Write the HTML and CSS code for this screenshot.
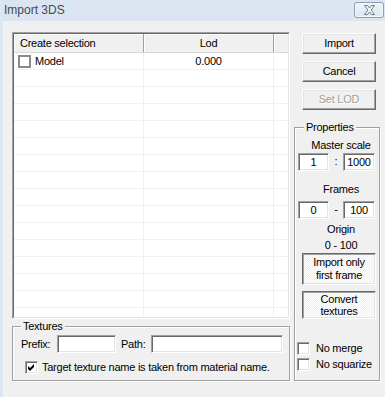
FILE: index.html
```html
<!DOCTYPE html>
<html>
<head>
<meta charset="utf-8">
<title>Import 3DS</title>
<link rel="stylesheet" href="styles.css">
</head>
<body>
<div class="window">
  <div class="titlebar">
    <span class="title">Import 3DS</span>
    <button class="close" aria-label="Close">
      <svg width="13" height="10" viewBox="0 0 13 10"><path d="M1.5 0.5 H4.5 L6.5 3 L8.5 0.5 H11.5 L8.2 5 L11.5 9.5 H8.5 L6.5 7 L4.5 9.5 H1.5 L4.8 5 Z" fill="#f5f7fa" stroke="#6f7c8e" stroke-width="1" stroke-linejoin="round"/></svg>
    </button>
  </div>
  <div class="client">
    <div class="left">
      <div class="list">
        <div class="list-inner">
          <div class="list-head">
            <div class="hc c1">Create selection</div>
            <div class="hc c2 center">Lod</div>
            <div class="hc c3"></div>
          </div>
          <div class="list-body">
            <div class="row">
              <div class="cell c1 model"><span class="cb flat"></span><span>Model</span></div>
              <div class="cell c2 center">0.000</div>
              <div class="cell c3"></div>
            </div>
            <div class="row"><div class="cell c1"></div><div class="cell c2"></div><div class="cell c3"></div></div>
            <div class="row"><div class="cell c1"></div><div class="cell c2"></div><div class="cell c3"></div></div>
            <div class="row"><div class="cell c1"></div><div class="cell c2"></div><div class="cell c3"></div></div>
            <div class="row"><div class="cell c1"></div><div class="cell c2"></div><div class="cell c3"></div></div>
            <div class="row"><div class="cell c1"></div><div class="cell c2"></div><div class="cell c3"></div></div>
            <div class="row"><div class="cell c1"></div><div class="cell c2"></div><div class="cell c3"></div></div>
            <div class="row"><div class="cell c1"></div><div class="cell c2"></div><div class="cell c3"></div></div>
            <div class="row"><div class="cell c1"></div><div class="cell c2"></div><div class="cell c3"></div></div>
            <div class="row"><div class="cell c1"></div><div class="cell c2"></div><div class="cell c3"></div></div>
            <div class="row"><div class="cell c1"></div><div class="cell c2"></div><div class="cell c3"></div></div>
            <div class="row"><div class="cell c1"></div><div class="cell c2"></div><div class="cell c3"></div></div>
            <div class="row"><div class="cell c1"></div><div class="cell c2"></div><div class="cell c3"></div></div>
            <div class="row"><div class="cell c1"></div><div class="cell c2"></div><div class="cell c3"></div></div>
            <div class="row"><div class="cell c1"></div><div class="cell c2"></div><div class="cell c3"></div></div>
            <div class="row"><div class="cell c1"></div><div class="cell c2"></div><div class="cell c3"></div></div>
          </div>
        </div>
      </div>
      <div class="group textures">
        <div class="glabel">Textures</div>
        <div class="tex-row">
          <span class="lbl prefix-lbl">Prefix:</span>
          <span class="field prefix-field"></span>
          <span class="lbl path-lbl">Path:</span>
          <span class="field path-field"></span>
        </div>
        <div class="check-row tex-check">
          <span class="cb"><svg width="7" height="7" viewBox="0 0 7 7"><path d="M0 2 L2 4 L6 0 L6 3 L2 7 L0 5 Z" fill="#000"/></svg></span>
          <span>Target texture name is taken from material name.</span>
        </div>
      </div>
    </div>
    <div class="right">
      <button class="btn first">Import</button>
      <button class="btn">Cancel</button>
      <button class="btn disabled">Set LOD</button>
      <div class="group props">
        <div class="glabel props-label">Properties</div>
        <div class="ptext master">Master scale</div>
        <div class="pair pair-scale">
          <span class="field small">1</span>
          <span class="sep">:</span>
          <span class="field small wide">1000</span>
        </div>
        <div class="ptext frames">Frames</div>
        <div class="pair pair-frames">
          <span class="field small">0</span>
          <span class="sep">-</span>
          <span class="field small wide">100</span>
        </div>
        <div class="ptext origin">Origin</div>
        <div class="ptext range">0 - 100</div>
        <div class="toggle only-first">Import only<br>first frame</div>
        <div class="toggle convert">Convert<br>textures</div>
        <div class="check-row merge"><span class="cb"></span><span>No merge</span></div>
        <div class="check-row squarize"><span class="cb"></span><span>No squarize</span></div>
      </div>
    </div>
  </div>
</div>
</body>
</html>
```
FILE: styles.css
```css
* { box-sizing: border-box; }
html, body { margin: 0; padding: 0; }
body {
  width: 385px;
  height: 397px;
  overflow: hidden;
  background: #f0f0f0;
  font-family: "Liberation Sans", Arial, sans-serif;
  font-size: 11px;
  letter-spacing: -0.25px;
  color: #000;
}
.window {
  width: 385px;
  height: 397px;
  display: flex;
  flex-direction: column;
  background: #f0f0f0;
  border-left: 3px solid #dde7f3;
}
.titlebar {
  height: 21px;
  flex: none;
  background: #dbe5f1;
  display: flex;
  justify-content: space-between;
  align-items: flex-start;
  padding: 0 1px 0 1px;
}
.title {
  font-size: 12px;
  letter-spacing: 0;
  color: #444a52;
  line-height: 21px;
}
.close {
  margin-top: 2px;
  width: 30px;
  height: 16px;
  padding: 0;
  border: 1px solid #8e9cb0;
  border-radius: 3px;
  background: linear-gradient(#edf2f8, #dde6f1);
  box-shadow: inset 0 0 0 1px #f6f9fc;
  display: flex;
  align-items: center;
  justify-content: center;
}
.close svg { display: block; }
.client {
  flex: 1;
  display: flex;
  gap: 4px;
  padding: 11px 5px 0 9px;
}
.left {
  width: 278px;
  display: flex;
  flex-direction: column;
}
.list {
  height: 287px;
  border: 1px solid;
  border-color: #a0a0a0 #ffffff #ffffff #a0a0a0;
}
.list-inner {
  height: 100%;
  border: 1px solid;
  border-color: #696969 #e3e3e3 #e3e3e3 #696969;
  background: #fff;
  overflow: hidden;
}
.list-head {
  display: flex;
  height: 19px;
  background: #f0f0f0;
  border-bottom: 1px solid #d8d8d8;
}
.hc {
  line-height: 18px;
  border-right: 1px solid #a0a0a0;
  box-shadow: inset 1px 1px #ffffff;
  padding-left: 6px;
  white-space: nowrap;
}
.c1 { width: 130px; }
.c2 { width: 130px; }
.c3 { flex: 1; border-right: none; }
.center { text-align: center; padding-left: 0; }
.row {
  display: flex;
  height: 17px;
  border-bottom: 1px solid #f0f0f0;
}
.cell {
  line-height: 16px;
  border-right: 1px solid #f0f0f0;
}
.cell.c3 { border-right: none; }
.model {
  display: flex;
  align-items: center;
  gap: 4px;
  padding-left: 4px;
}
.cb {
  width: 13px;
  height: 13px;
  flex: none;
  background: #fff;
  border: 1px solid;
  border-color: #a0a0a0 #ffffff #ffffff #a0a0a0;
  box-shadow: inset 1px 1px #696969, inset -1px -1px #e3e3e3;
  display: flex;
  align-items: center;
  justify-content: center;
}
.cb.flat {
  border: 2px solid #8a8a8a;
  box-shadow: none;
}
.group {
  border: 1px solid #a0a0a0;
  box-shadow: inset 1px 1px #ffffff, 1px 1px #ffffff;
}
.glabel {
  width: max-content;
  margin-top: -7px;
  padding: 0 2px;
  line-height: 13px;
  background: #f0f0f0;
}
.textures {
  margin-top: 7px;
  height: 55px;
  padding: 0 6px 0 8px;
}
.tex-row {
  display: flex;
  margin-top: 2px;
  height: 18px;
}
.lbl { line-height: 18px; }
.prefix-lbl { width: 36px; }
.path-lbl { width: 30px; margin-left: 5px; }
.field {
  display: block;
  height: 18px;
  background: #fff;
  border: 1px solid;
  border-color: #a0a0a0 #ffffff #ffffff #a0a0a0;
  box-shadow: inset 1px 1px #696969, inset -1px -1px #e3e3e3;
  line-height: 16px;
  text-align: center;
}
.prefix-field { width: 59px; }
.path-field { width: 132px; }
.check-row {
  display: flex;
  align-items: center;
  gap: 4px;
  height: 13px;
  line-height: 13px;
}
.tex-check {
  margin-top: 8px;
  margin-left: 4px;
}
.right {
  width: 86px;
  display: flex;
  flex-direction: column;
}
.btn {
  width: 74px;
  height: 21px;
  margin: 7px 0 0 8px;
  padding: 0;
  font: inherit;
  letter-spacing: inherit;
  color: #000;
  background: #f0f0f0;
  border: 1px solid;
  border-color: #ffffff #696969 #696969 #ffffff;
  box-shadow: inset -1px -1px #a0a0a0, inset 1px 1px #e3e3e3;
  line-height: 19px;
  text-align: center;
}
.btn.first { margin-top: 1px; }
.btn.disabled {
  color: #a0a0a0;
  text-shadow: 1px 1px #ffffff;
}
.props {
  margin-top: 17px;
  height: 254px;
  padding: 0 0 0 2px;
}
.props-label { margin-left: 7px; }
.ptext {
  line-height: 13px;
  height: 13px;
  text-align: center;
  padding-left: 6px;
}
.master { margin-top: 5px; }
.frames { margin-top: 12px; }
.origin { margin-top: 4px; }
.range { margin-top: 3px; }
.pair {
  display: flex;
  padding-left: 1px;
  margin-top: 1px;
}
.pair-frames { margin-top: 5px; }
.field.small { width: 31px; }
.field.small.wide { width: 32px; }
.sep {
  width: 14px;
  text-align: center;
  line-height: 16px;
}
.toggle {
  width: 74px;
  margin-left: 5px;
  border: 1px solid;
  border-color: #696969 #ffffff #ffffff #696969;
  box-shadow: inset 1px 1px #a0a0a0, inset -1px -1px #e3e3e3;
  background-color: #f0f0f0;
  background-image: conic-gradient(#ffffff 25%, #f0f0f0 0 50%, #ffffff 0 75%, #f0f0f0 0);
  background-size: 2px 2px;
  text-align: center;
  display: flex;
  flex-direction: column;
  justify-content: center;
  line-height: 13px;
}
.only-first { margin-top: 1px; height: 32px; }
.convert { margin-top: 6px; height: 28px; line-height: 12px; }
.merge { margin-top: 23px; gap: 6px; }
.squarize { margin-top: 3px; gap: 6px; }
```
